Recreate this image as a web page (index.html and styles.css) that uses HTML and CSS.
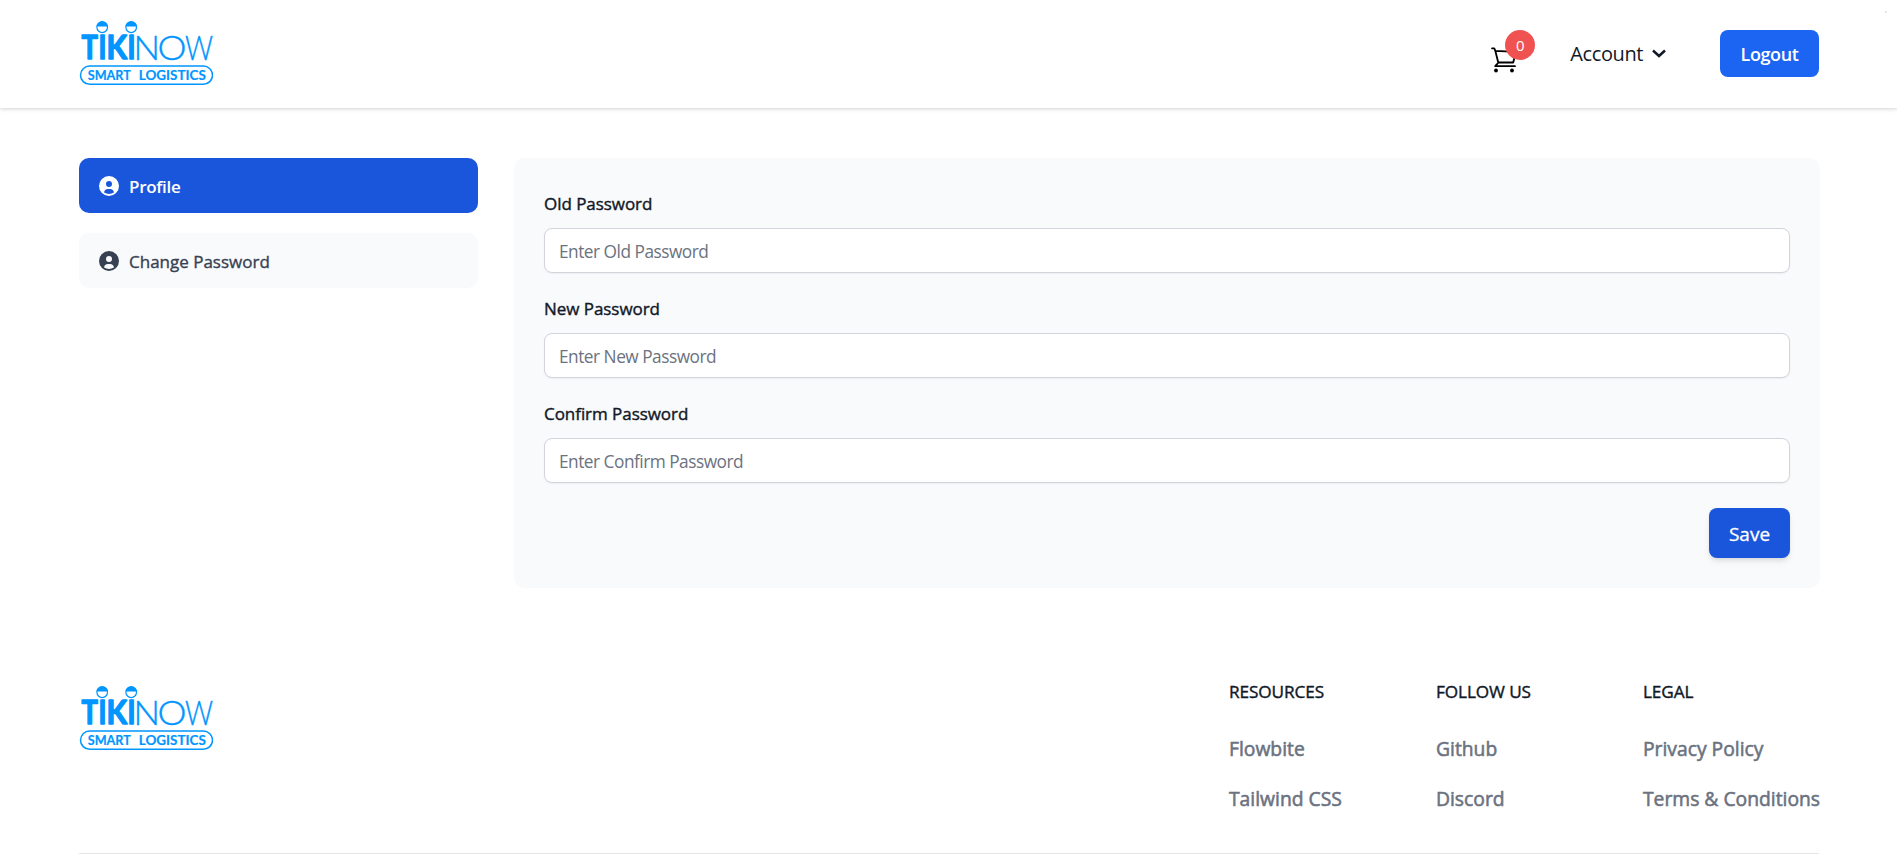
FILE: index.html
```html
<!DOCTYPE html>
<html lang="en">
<head>
<meta charset="utf-8">
<title>Change Password</title>
<link rel="stylesheet" href="styles.css">
</head>
<body>
<header class="header">
  <div class="container header-row">
    <svg class="logo" viewBox="0 0 134 66">
      <g id="logo">
        <g class="logo-bold">
          <text x="2.600" y="38" textLength="16.400" lengthAdjust="spacingAndGlyphs">T</text>
          <text x="19.400" y="38" textLength="8" lengthAdjust="spacingAndGlyphs">I</text>
          <text x="27.600" y="38" textLength="20.500" lengthAdjust="spacingAndGlyphs">K</text>
          <text x="48.400" y="38" textLength="8" lengthAdjust="spacingAndGlyphs">I</text>
        </g>
        <g class="logo-light">
          <text x="54.500" y="38.500" textLength="26.500" lengthAdjust="spacingAndGlyphs">N</text>
          <text x="78.600" y="38.500" textLength="29" lengthAdjust="spacingAndGlyphs">O</text>
          <text x="106" y="38.500" textLength="28" lengthAdjust="spacingAndGlyphs">W</text>
        </g>
        <g fill="#fff" stroke="#0095ff" stroke-width="1.200"><circle cx="23.200" cy="6.300" r="5.300"/><circle cx="52.200" cy="6.300" r="5.300"/></g>
        <path fill="#0095ff" d="M17.400 5.600a5.800 5.600 0 0 1 11.600 0zM46.400 5.600a5.800 5.600 0 0 1 11.600 0z"/>
        <rect x="1.500" y="45" width="132" height="18.300" rx="9.150" fill="#fff" stroke="#0095ff" stroke-width="1.500"/>
        <text class="logo-tag" x="8.800" y="58.800" textLength="43" lengthAdjust="spacingAndGlyphs">SMART</text>
        <text class="logo-tag" x="59.800" y="58.800" textLength="67" lengthAdjust="spacingAndGlyphs">LOGISTICS</text>
      </g>
    </svg>
    <nav class="nav">
      <div class="cart">
        <svg width="26" height="28" viewBox="0 0 26 28" fill="none" stroke="#000" stroke-width="1.800" stroke-linejoin="round" stroke-linecap="round"><path d="M1 2.300h2.300l1 2.500 3 12M4.300 4.800 25 5.800l-2.800 10.700H7.500L4.200 20.200H24"/><g fill="#000" stroke="none"><circle cx="5" cy="24.500" r="1.900"/><circle cx="21" cy="24.500" r="1.900"/></g></svg>
        <span class="badge">0</span>
      </div>
      <div class="account"><span>Account</span>
        <svg width="14" height="9" viewBox="0 0 14 9" fill="none" stroke="#111827" stroke-width="2.500"><path d="M1 1.500 7 7l6-5.500"/></svg>
      </div>
      <button class="logout">Logout</button>
    </nav>
  </div>
  <i class="speck"></i>
</header>
<main class="container content">
  <aside class="side">
    <a class="tab active"><svg class="ico" viewBox="0 0 20 20"><path id="user" fill="currentColor" fill-rule="evenodd" d="M10 0a10 10 0 1 0 10 10A10.011 10.011 0 0 0 10 0Zm0 5a3 3 0 1 1 0 6 3 3 0 0 1 0-6Zm0 13a8.949 8.949 0 0 1-4.951-1.488A3.987 3.987 0 0 1 9 13h2a3.987 3.987 0 0 1 3.951 3.512A8.949 8.949 0 0 1 10 18Z"/></svg><span>Profile</span></a>
    <a class="tab"><svg class="ico" viewBox="0 0 20 20"><use href="#user"/></svg><span>Change Password</span></a>
  </aside>
  <form class="panel">
    <label><span>Old Password</span><input class="field" placeholder="Enter Old Password"></label>
    <label><span>New Password</span><input class="field" placeholder="Enter New Password"></label>
    <label><span>Confirm Password</span><input class="field" placeholder="Enter Confirm Password"></label>
    <button type="button" class="save">Save</button>
  </form>
</main>
<footer class="container footer">
  <div class="footer-top">
    <svg class="logo" viewBox="0 0 134 66"><use href="#logo"/></svg>
    <div class="columns">
      <div class="col"><h2>RESOURCES</h2><a>Flowbite</a><a>Tailwind CSS</a></div>
      <div class="col"><h2>FOLLOW US</h2><a>Github</a><a>Discord</a></div>
      <div class="col"><h2>LEGAL</h2><a>Privacy Policy</a><a>Terms &amp; Conditions</a></div>
    </div>
  </div>
  <hr>
</footer>
</body>
</html>
```
FILE: styles.css
```css
* { box-sizing: border-box; }
body { margin: 0; height: 865px; overflow: hidden; background: #fff; color: #111827; font-family: "Open Sans", "Noto Sans", sans-serif; font-size: 17px; line-height: 27px; }
.container { width: 1740px; margin-left: 79px; }
.header { position: relative; height: 108px; box-shadow: 0 1px 4px rgba(0,0,0,.18); }
.header-row { height: 107px; display: flex; align-items: center; justify-content: space-between; }
.logo { display: block; width: 134px; height: 66px; }
.header .logo { margin-top: 1px; }
.logo-bold text { font: 700 32px Lato, sans-serif; fill: #0095ff; stroke: #0095ff; stroke-width: 1.4; stroke-linejoin: round; }
.logo-light text { font: 300 34px Lato, sans-serif; fill: #0095ff; stroke: #0095ff; stroke-width: .4; }
.logo-tag { font: 700 14px Lato, sans-serif; fill: #0095ff; stroke: #0095ff; stroke-width: .2; }
.nav { display: flex; align-items: center; }
.cart { position: relative; width: 44px; height: 47px; padding-top: 16px; margin-right: 35px; }
.cart svg { display: block; }
.badge { position: absolute; left: 14px; top: 0; width: 30px; height: 30px; border-radius: 50%; background: #f05252; color: #fff; font-size: 15px; line-height: 31px; text-align: center; }
.account { display: flex; align-items: center; gap: 9px; margin-right: 54px; font-size: 20px; letter-spacing: -.4px; }
.logout { width: 99px; height: 47px; border: 0; border-radius: 8px; background: #1c64f2; color: #fff; font: 600 18px/27px "Open Sans", sans-serif; letter-spacing: -.4px; padding: 2px 0 0; }
.speck { position: absolute; left: 1885px; top: 11px; width: 2px; height: 2px; background: #e5e7eb; }
.content { display: flex; gap: 36px; padding-top: 50px; align-items: flex-start; height: 480px; }
.side { width: 399px; display: flex; flex-direction: column; gap: 20px; }
.tab { display: flex; align-items: center; gap: 10px; height: 55px; padding: 0 20px; border-radius: 10px; background: #f9fafb; color: #374151; -webkit-text-stroke: .35px #374151; }
.tab span { padding-top: 2px; }
.active { background: #1a56db; color: #fff; font-weight: 600; letter-spacing: -.3px; -webkit-text-stroke: 0; }
.ico { width: 20px; height: 20px; }
.panel { flex: 1; height: 430px; margin-right: -1px; padding: 30px; border-radius: 10px; background: #f9fafb; display: flex; flex-direction: column; }
label { display: flex; flex-direction: column; gap: 10px; margin-bottom: 20px; }
label span { line-height: 31px; height: 30px; letter-spacing: -.05px; -webkit-text-stroke: .4px #111827; }
.field { height: 45px; border: 1px solid #d1d5db; border-radius: 8px; padding: 1px 14px 0; background: #fff; font: 400 17.300px "Open Sans", sans-serif; letter-spacing: -.5px; box-shadow: 0 1px 2px rgba(0,0,0,.05); }
.field::placeholder { color: #6b7280; opacity: 1; }
.save { align-self: flex-end; flex: none; width: 81px; height: 50px; margin-top: 5px; border: 0; border-radius: 8px; background: #1a56db; color: #fff; font: 400 19px "Open Sans", sans-serif; -webkit-text-stroke: .3px #fff; padding: 2px 0 0; box-shadow: 0 4px 6px -1px rgba(0,0,0,.1), 0 2px 4px -1px rgba(0,0,0,.06); }
.footer { padding-top: 89px; }
.footer-top { display: flex; justify-content: space-between; height: 176px; padding-top: 8px; }
.footer .logo { margin-top: 1px; }
.columns { display: grid; grid-template-columns: 207px 207px 176px; }
.col { display: flex; flex-direction: column; }
h2 { margin: -7px 0 29px; font-size: 17.2px; font-weight: 400; line-height: 27px; letter-spacing: -.1px; -webkit-text-stroke: .4px #111827; }
.col a { color: #6b7280; font-size: 19.3px; -webkit-text-stroke: .55px #6b7280; line-height: 30px; margin-bottom: 20px; white-space: nowrap; }
hr { margin: 0; border: 0; height: 1px; background: #e5e7eb; }
```
